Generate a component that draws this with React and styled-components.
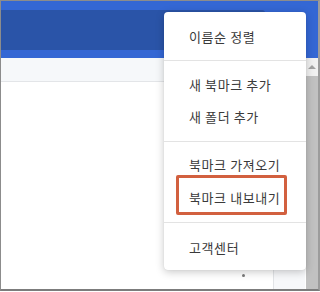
import styled, { createGlobalStyle } from "styled-components";

const GlobalStyle = createGlobalStyle`
  html, body {
    margin: 0;
    padding: 0;
    background: #fff;
    overflow: hidden;
  }
  * {
    box-sizing: border-box;
  }
`;

const Frame = styled.div`
  position: relative;
  width: 320px;
  height: 291px;
  border-top: 1px solid #8c8c8c;
  border-left: 1px solid #8c8c8c;
  border-right: 2px solid #9c9c9c;
  border-bottom: 2px solid #7c7c7c;
  display: flex;
  flex-direction: column;
  font-family: "Noto Sans CJK KR", "Noto Sans", sans-serif;
  overflow: hidden;
`;

const Header = styled.header`
  height: 57px;
  padding: 9px 0 8px;
  background: #3467d4;
  display: flex;
`;

const SearchBar = styled.div`
  width: 264px;
  height: 40px;
  background: #2a54a8;
  border-radius: 0 3px 3px 0;
`;

const Body = styled.div`
  flex: 1;
  display: flex;
  min-height: 0;
`;

const Main = styled.div`
  flex: 1;
  display: flex;
  flex-direction: column;
`;

const Toolbar = styled.div`
  height: 24px;
  background: #f6f8fa;
  border-bottom: 1px solid #e3e5e8;
`;

const Content = styled.div`
  flex: 1;
  display: flex;
`;

const ListArea = styled.div`
  flex: 1;
  display: flex;
  flex-direction: column;
  justify-content: flex-end;
  align-items: flex-end;
  padding: 0 28px 12px 0;
  background: #fff;
`;

const Kebab = styled.div`
  display: flex;
  flex-direction: column;
  gap: 5px;

  span {
    width: 3px;
    height: 3px;
    border-radius: 50%;
    background: #7a7a7a;
  }
`;

const SidePanel = styled.div`
  width: 33px;
  background: #f7f8fa;
  border-left: 1px solid #e2e4e7;
  border-right: 1px solid #fff;
`;

const Scrollbar = styled.div`
  width: 12px;
  display: flex;
  flex-direction: column;
  background: #f1f1f1;
`;

const ScrollArrow = styled.div`
  height: 18px;
  display: flex;
  align-items: center;
  justify-content: center;

  &::before {
    content: "";
    border-left: 4px solid transparent;
    border-right: 4px solid transparent;
    border-bottom: 4px solid #a3a3a3;
  }
`;

const ScrollThumb = styled.div`
  flex: 1;
  background: #c1c1c1;
`;

const Menu = styled.div`
  position: absolute;
  left: 163px;
  top: 11px;
  width: 142px;
  background: #fff;
  border-radius: 4px;
  box-shadow: 0 2px 8px rgba(0, 0, 0, 0.22), 0 0 1px rgba(0, 0, 0, 0.15);
`;

const Section = styled.div`
  padding: ${(p) => p.$pad};
  border-top: ${(p) => (p.$first ? "none" : "1px solid #e3e3e3")};
`;

const Item = styled.div`
  position: relative;
  height: ${(p) => (p.$marked ? "34px" : "32px")};
  display: flex;
  align-items: center;
  padding-left: 25px;
  font-size: 13px;
  letter-spacing: 0.6px;
  color: #3a3a3a;
  white-space: nowrap;

  ${(p) =>
    p.$marked &&
    `
    &::after {
      content: "";
      position: absolute;
      left: 12px;
      right: 19px;
      top: -5px;
      bottom: -1px;
      border: 3px solid #d2603f;
      border-radius: 2px;
    }
  `}
`;

const sections = [
  { pad: "8px 0 8px", items: ["이름순 정렬"] },
  { pad: "7px 0 9px", items: ["새 북마크 추가", "새 폴더 추가"] },
  { pad: "6px 0 8px", items: ["북마크 가져오기", "북마크 내보내기"], marked: 1 },
  { pad: "8px 0 7px", items: ["고객센터"] },
];

export default function App() {
  return (
    <>
      <GlobalStyle />
      <Frame>
        <Header>
          <SearchBar />
        </Header>
        <Body>
          <Main>
            <Toolbar />
            <Content>
              <ListArea>
                <Kebab>
                  <span />
                  <span />
                  <span />
                </Kebab>
              </ListArea>
              <SidePanel />
            </Content>
          </Main>
          <Scrollbar>
            <ScrollArrow />
            <ScrollThumb />
          </Scrollbar>
        </Body>
        <Menu>
          {sections.map((s, i) => (
            <Section key={i} $pad={s.pad} $first={i === 0}>
              {s.items.map((label, j) => (
                <Item key={label} $marked={s.marked === j}>
                  {label}
                </Item>
              ))}
            </Section>
          ))}
        </Menu>
      </Frame>
    </>
  );
}
